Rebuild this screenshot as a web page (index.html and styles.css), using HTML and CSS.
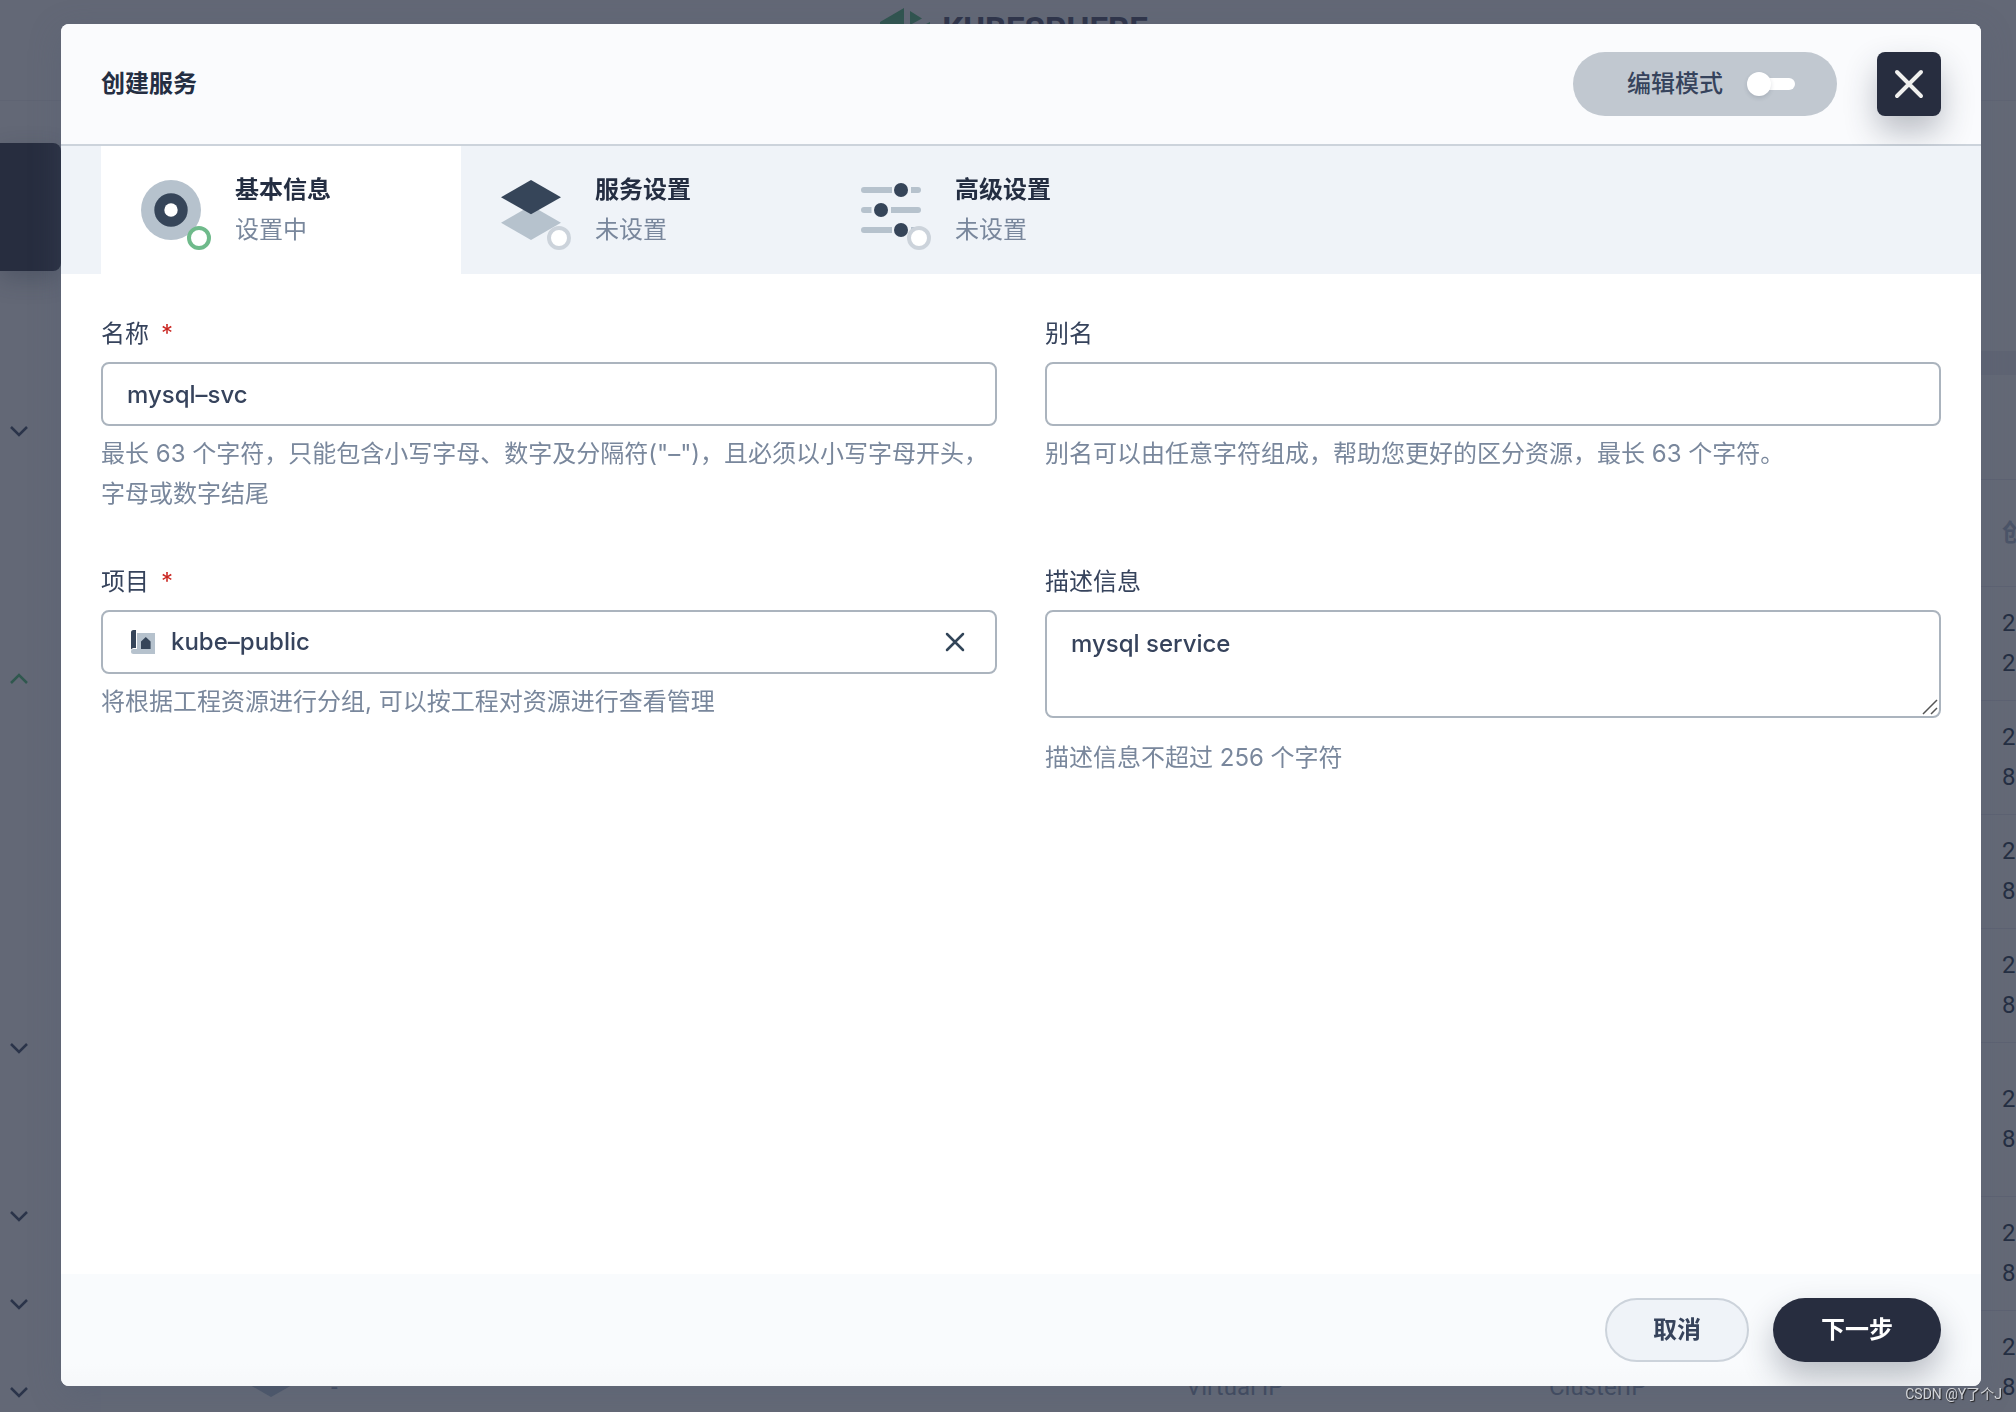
FILE: index.html
```html
<!DOCTYPE html>
<html lang="zh-CN">
<head>
<meta charset="utf-8">
<title>创建服务</title>
<meta name="viewport" content="width=device-width, initial-scale=1">
<link rel="stylesheet" href="styles.css">
</head>
<body>
<div class="page" aria-hidden="true">
  <header class="page-header">
    <svg class="logo-mark" width="50" height="48" viewBox="0 0 50 48"><path d="M0 14 24 0v48L0 34z M30 3 42 10.500 30 17z M50 14v20L30 24z"/></svg>
    <span class="logo-text">KUBESPHERE</span>
  </header>
  <div class="page-body">
    <aside class="sidebar">
      <div class="sidebar-card"></div>
      <div class="nav-item"><svg class="chevron" viewBox="0 0 20 12"><path d="M2 2l8 8 8-8"/></svg></div>
      <div class="nav-sub nav-sub-medium"></div>
      <div class="nav-item"><svg class="chevron chevron-open" viewBox="0 0 20 12"><path d="M2 10l8-8 8 8"/></svg></div>
      <div class="nav-sub nav-sub-large"></div>
      <div class="nav-item"><svg class="chevron" viewBox="0 0 20 12"><path d="M2 2l8 8 8-8"/></svg></div>
      <div class="nav-sub nav-sub-small"></div>
      <div class="nav-item"><svg class="chevron" viewBox="0 0 20 12"><path d="M2 2l8 8 8-8"/></svg></div>
      <div class="nav-item"><svg class="chevron" viewBox="0 0 20 12"><path d="M2 2l8 8 8-8"/></svg></div>
      <div class="nav-item"><svg class="chevron" viewBox="0 0 20 12"><path d="M2 2l8 8 8-8"/></svg></div>
    </aside>
    <main class="content">
      <div class="banner"></div>
      <div class="toolbar"></div>
      <table class="services">
        <colgroup><col class="col-icon"><col class="col-name"><col class="col-ip"><col class="col-type"><col class="col-date"></colgroup>
        <thead><tr><th></th><th></th><th></th><th></th><th>创</th></tr></thead>
        <tbody>
          <tr><td></td><td></td><td></td><td></td><td>2<br>2</td></tr>
          <tr><td></td><td></td><td></td><td></td><td>2<br>8</td></tr>
          <tr><td></td><td></td><td></td><td></td><td>2<br>8</td></tr>
          <tr><td></td><td></td><td></td><td></td><td>2<br>8</td></tr>
          <tr class="tall"><td></td><td></td><td></td><td></td><td>2<br>8</td></tr>
          <tr><td></td><td></td><td></td><td></td><td>2<br>8</td></tr>
          <tr>
            <td><svg class="service-icon" width="60" height="60" viewBox="0 0 60 60"><path d="M0 43 30 26l30 17-30 17z"/></svg></td>
            <td><br><span class="muted">-</span></td>
            <td><br><span class="muted">Virtual IP</span></td>
            <td><br><span class="muted">ClusterIP</span></td>
            <td>2<br>8</td>
          </tr>
        </tbody>
      </table>
    </main>
  </div>
</div>

<div class="overlay">
  <form class="modal" role="dialog" aria-labelledby="modal-title">
    <header class="modal-header">
      <h1 class="modal-title" id="modal-title">创建服务</h1>
      <label class="mode-switch">编辑模式<input class="switch" type="checkbox" role="switch"></label>
      <button class="close-button" type="button" aria-label="关闭">
        <svg width="30" height="30" viewBox="0 0 30 30"><path d="M3 3l24 24M27 3 3 27"/></svg>
      </button>
    </header>

    <nav class="steps">
      <button class="step step-current" type="button">
        <span class="step-icon">
          <svg width="60" height="60" viewBox="0 0 60 60"><circle class="tone-light" cx="30" cy="30" r="30"/><circle class="tone-dark" cx="30" cy="30" r="16.700"/><circle fill="#fff" cx="30" cy="30" r="6.700"/></svg>
          <span class="step-dot"></span>
        </span>
        <span class="step-text"><strong>基本信息</strong><span>设置中</span></span>
      </button>
      <button class="step" type="button">
        <span class="step-icon">
          <svg width="60" height="60" viewBox="0 0 60 60"><path class="tone-light" d="M0 42.700 30 25.500l30 17.200L30 60z"/><path class="tone-dark" d="M0 17.200 30 0l30 17.200L30 34.300z"/></svg>
          <span class="step-dot"></span>
        </span>
        <span class="step-text"><strong>服务设置</strong><span>未设置</span></span>
      </button>
      <button class="step" type="button">
        <span class="step-icon">
          <svg width="60" height="60" viewBox="0 0 60 60"><path class="tone-light" d="M3 7h28v6H3a3 3 0 0 1 0-6zM50 7h7a3 3 0 0 1 0 6h-7zM3 27h7.500v6H3a3 3 0 0 1 0-6zM30 27h27a3 3 0 0 1 0 6H30zM3 47h28v6H3a3 3 0 0 1 0-6zM50 47h7a3 3 0 0 1 0 6h-7z"/><circle class="tone-dark" cx="40" cy="10" r="7"/><circle class="tone-dark" cx="20" cy="30" r="7"/><circle class="tone-dark" cx="40" cy="50" r="7"/></svg>
          <span class="step-dot"></span>
        </span>
        <span class="step-text"><strong>高级设置</strong><span>未设置</span></span>
      </button>
    </nav>

    <div class="fields">
      <div class="field">
        <label class="field-label" for="name">名称<span class="required">*</span></label>
        <input class="control" id="name" type="text" value="mysql–svc">
        <p class="hint">最长 63 个字符，只能包含小写字母、数字及分隔符("–")，且必须以小写字母开头，字母或数字结尾</p>
      </div>
      <div class="field">
        <label class="field-label" for="alias">别名</label>
        <input class="control" id="alias" type="text">
        <p class="hint">别名可以由任意字符组成，帮助您更好的区分资源，最长 63 个字符。</p>
      </div>
      <div class="field">
        <label class="field-label" for="project">项目<span class="required">*</span></label>
        <div class="control project-control">
          <svg width="24" height="24" viewBox="0 0 24 24"><path class="tone-light" d="M6 3h18v21H2.500A2.500 2.500 0 0 1 0 21.500 2.500 2.500 0 0 1 2.500 19H6z"/><path class="tone-dark" d="M0 2.500A2.500 2.500 0 0 1 2.500 0H5v18H2.500A3 3 0 0 0 0 19.500zM10 11.500 14.800 7l4.800 4.500V19H10z"/></svg>
          <select class="project-select" id="project"><option>kube–public</option></select>
          <button class="clear-button" type="button" aria-label="清除"><svg width="20" height="20" viewBox="0 0 20 20"><path d="M2 2l16 16M18 2 2 18"/></svg></button>
        </div>
        <p class="hint">将根据工程资源进行分组, 可以按工程对资源进行查看管理</p>
      </div>
      <div class="field">
        <label class="field-label" for="description">描述信息</label>
        <div class="textarea-wrap">
          <textarea class="control textarea" id="description">mysql service</textarea>
          <svg class="grip" width="16" height="16" viewBox="0 0 16 16"><path d="M1 15 15 1M9 15l6-6"/></svg>
        </div>
        <p class="hint">描述信息不超过 256 个字符</p>
      </div>
    </div>

    <footer class="modal-footer">
      <button class="button button-default" type="button">取消</button>
      <button class="button button-primary" type="submit">下一步</button>
    </footer>
  </form>
</div>
<div class="watermark">CSDN @Y了个J</div>
</body>
</html>
```

FILE: styles.css
```css
* {
  box-sizing: border-box;
}

body {
  margin: 0;
  height: 100vh;
  overflow: hidden;
  background: #636876;
  color: #242e42;
  font: 24px/40px Inter, "Noto Sans CJK SC", sans-serif;
}

button,
input,
select,
textarea {
  margin: 0;
  font: inherit;
  color: inherit;
}

h1,
p {
  margin: 0;
}

.tone-light { fill: #b6c2cd; }
.tone-dark { fill: #364559; }

/* Dimmed page behind the dialog */

.page {
  height: 100vh;
  overflow: hidden;
  font-family: Roboto, "Noto Sans CJK SC", sans-serif;
}

.page-header {
  display: flex;
  justify-content: center;
  align-items: flex-start;
  gap: 12px;
  height: 101px;
  padding: 8px 0 0 12px;
  border-bottom: 1px solid #5f6473;
}

.logo-mark {
  fill: #30544f;
}

.logo-text {
  padding-top: 2px;
  color: #2e3349;
  font-size: 33px;
  font-weight: 700;
}

.page-body {
  display: grid;
  grid-template-columns: 101px minmax(0, 1fr);
}

.sidebar {
  padding-top: 42px;
}

.sidebar-card {
  width: 61px;
  height: 128px;
  margin-bottom: 116px;
  border-radius: 0 8px 8px 0;
  background: #272d3f;
  box-shadow: 0 8px 24px rgba(36, 46, 66, 0.3);
}

.nav-item {
  display: flex;
  align-items: center;
  height: 88px;
  padding-left: 9px;
}

.nav-sub-small { height: 80px; }
.nav-sub-medium { height: 160px; }
.nav-sub-large { height: 281px; }

.chevron {
  width: 20px;
  height: 12px;
  fill: none;
  stroke: #2b344a;
  stroke-width: 2.5;
}

.chevron-open {
  stroke: #30584f;
}

.content {
  background: #646976;
}

.banner {
  height: 250px;
}

.toolbar {
  height: 129px;
  border-top: 24px solid #5f6473;
  border-bottom: 1px solid #5d6272;
}

.services {
  table-layout: fixed;
  width: 2080px;
  border-collapse: collapse;
}

.col-icon { width: 230px; }
.col-name { width: 855px; }
.col-ip { width: 363px; }
.col-type { width: 453px; }

.services th {
  height: 106px;
  padding: 0;
  border-bottom: 1px solid #5d6272;
  color: #4b5468;
  text-align: left;
}

.services td {
  height: 114px;
  padding: 0;
  border-bottom: 1px solid #5d6272;
}

.services .tall td {
  height: 154px;
}

.service-icon {
  display: block;
  margin-left: 140px;
  fill: #4c5669;
}

.muted {
  color: #40495e;
}

/* Dialog */

.overlay {
  position: fixed;
  inset: 0;
  display: flex;
  padding: 24px 35px 26px 61px;
}

.modal {
  flex: 1;
  display: flex;
  flex-direction: column;
  min-width: 0;
  border-radius: 8px;
  background: #fff;
  box-shadow: 0 8px 32px rgba(80, 92, 115, 0.3);
  overflow: hidden;
}

.modal-header {
  display: flex;
  align-items: center;
  gap: 40px;
  height: 122px;
  padding: 0 40px;
  border-bottom: 2px solid #ccd3db;
  background: #fafbfd;
}

.modal-title {
  flex: 1;
  font-size: 24px;
  font-weight: 600;
}

.mode-switch {
  display: flex;
  justify-content: space-between;
  align-items: center;
  width: 264px;
  height: 64px;
  padding: 0 42px 0 54px;
  border-radius: 32px;
  background: #c1c8d0;
  color: #36435c;
  font-weight: 500;
}

.switch {
  appearance: none;
  display: flex;
  align-items: center;
  width: 48px;
  height: 24px;
}

.switch::before {
  content: "";
  position: relative;
  z-index: 1;
  width: 24px;
  height: 24px;
  border-radius: 50%;
  background: #fff;
  box-shadow: 0 2px 4px rgba(36, 46, 66, 0.15);
}

.switch::after {
  content: "";
  width: 36px;
  height: 12px;
  margin-left: -12px;
  border-radius: 6px;
  background: #fff;
}

.close-button {
  display: grid;
  place-items: center;
  width: 64px;
  height: 64px;
  padding: 0;
  border: 0;
  border-radius: 8px;
  background: #272d3f;
  box-shadow: 0 16px 32px rgba(36, 46, 66, 0.3);
}

.close-button path {
  fill: none;
  stroke: #f0f0ee;
  stroke-width: 4;
  stroke-linecap: round;
}

.steps {
  display: flex;
  padding: 0 40px;
  background: #eff3f8;
}

.step {
  display: flex;
  gap: 34px;
  width: 360px;
  height: 128px;
  padding: 24px 40px;
  border: 0;
  background: none;
  text-align: left;
}

.step-current {
  background: #fff;
}

.step-icon {
  position: relative;
  width: 60px;
  height: 60px;
  margin-top: 10px;
}

.step-icon svg {
  display: block;
}

.step-dot {
  position: absolute;
  right: -10px;
  bottom: -10px;
  width: 24px;
  height: 24px;
  border: 4px solid #ccd3db;
  border-radius: 50%;
  background: #fff;
}

.step-current .step-dot {
  border-color: #6fba8b;
}

.step-text {
  display: flex;
  flex-direction: column;
  color: #79879c;
}

.step-text strong {
  color: #242e42;
  font-weight: 600;
}

.fields {
  flex: 1;
  display: grid;
  grid-template-columns: 1fr 1fr;
  align-content: start;
  gap: 48px;
  padding: 40px;
}

.field {
  display: flex;
  flex-direction: column;
  gap: 8px;
  min-width: 0;
}

.field-label {
  color: #36435c;
}

.required {
  margin-left: 12px;
  color: #ca2621;
}

.control {
  display: block;
  width: 100%;
  height: 64px;
  padding: 0 24px;
  border: 2px solid #abb4be;
  border-radius: 8px;
  background: #fff;
  color: #36435c;
  font-weight: 500;
}

.project-control {
  display: flex;
  align-items: center;
  gap: 16px;
  padding: 0 28px;
}

.project-select {
  flex: 1;
  appearance: none;
  padding: 0;
  border: 0;
  background: none;
}

.clear-button {
  display: flex;
  padding: 0 2px;
  border: 0;
  background: none;
}

.clear-button path {
  fill: none;
  stroke: #324558;
  stroke-width: 2.5;
  stroke-linecap: round;
}

.textarea-wrap {
  position: relative;
  margin-bottom: 12px;
}

.textarea {
  height: 108px;
  padding: 12px 24px;
  resize: none;
}

.grip {
  position: absolute;
  right: 3px;
  bottom: 3px;
  fill: none;
  stroke: #555;
  stroke-width: 1.5;
  pointer-events: none;
}

.hint {
  color: #79879c;
}

.modal-footer {
  display: flex;
  justify-content: flex-end;
  align-items: center;
  gap: 24px;
  height: 112px;
  padding: 0 40px;
  background: linear-gradient(#f9fbfd 80%, #f6f8fa);
}

.button {
  height: 64px;
  padding: 0 48px;
  border: 0;
  border-radius: 32px;
  font-weight: 600;
}

.button-default {
  padding: 0 46px;
  border: 2px solid #ccd3db;
  background: #eff3f8;
  color: #36435c;
}

.button-primary {
  background: #272d3f;
  box-shadow: 0 16px 32px rgba(36, 46, 66, 0.3);
  color: #fff;
}

.watermark {
  position: fixed;
  right: 14px;
  bottom: 8px;
  color: #d2d4d8;
  font: 14px/20px Roboto, "Noto Sans CJK SC", sans-serif;
  text-shadow: 1px 1px 1px #222;
}
```
